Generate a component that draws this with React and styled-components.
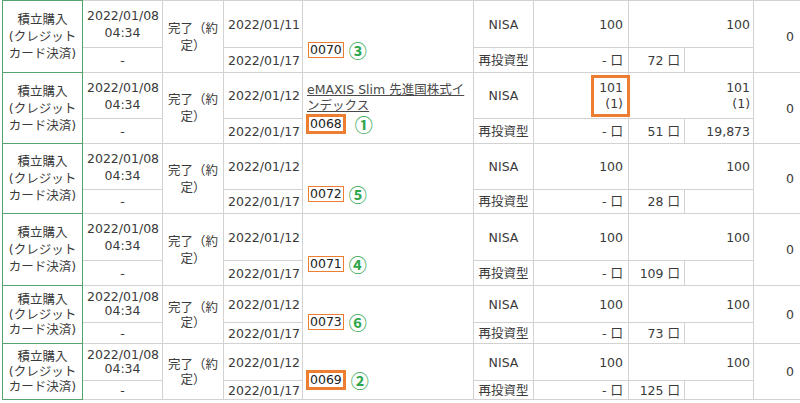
import React from 'react';
import styled, { createGlobalStyle } from 'styled-components';

const Global = createGlobalStyle`
  html, body { margin: 0; padding: 0; background: #fff; overflow: hidden; }
  body {
    font-family: "DejaVu Sans", "Noto Sans CJK JP", sans-serif;
    font-size: 12.5px;
    color: #3a3a3a;
  }
`;

const ORANGE = '#ed7d31';
const GREEN_LINE = '#55a36f';
const GRID = '#d2d2d2';

const Table = styled.table`
  border-collapse: collapse;
  table-layout: fixed;
  width: 799px;
  margin-left: 2px;
  font-size: 12.5px;
  color: #3a3a3a;
`;

const Col = styled.col`
  width: ${(p) => p.$w}px;
`;

const Row = styled.tr`
  height: ${(p) => p.$h}px;
`;

const Cell = styled.td`
  border: 1px solid ${GRID};
  padding: 0 ${(p) => (p.$pr != null ? p.$pr : 4)}px 0 4px;
  text-align: ${(p) => p.$align || 'center'};
  vertical-align: middle;
  line-height: ${(p) => p.$lh || 17}px;
  white-space: ${(p) => (p.$wrap ? 'normal' : 'nowrap')};
  overflow: visible;
`;

const KindCell = styled(Cell)`
  border: 1px solid ${GREEN_LINE};
  white-space: normal;
`;

const CodeCell = styled(Cell)`
  text-align: left;
  vertical-align: bottom;
  padding-bottom: ${(p) => p.$pb}px;
  padding-left: 3px;
`;

const FundLink = styled.a`
  display: block;
  color: #4a4a4a;
  text-decoration: underline;
  line-height: 16px;
  margin-left: 1px;
`;

const CodeLine = styled.div`
  display: flex;
  align-items: center;
  gap: 5px;
  height: 20px;
`;

const CodeBox = styled.span`
  display: inline-block;
  border: ${(p) => (p.$thick ? 3 : 1)}px solid ${ORANGE};
  line-height: 14px;
  padding: 0 1px;
  margin-left: ${(p) => (p.$thick ? 0 : 2)}px;
  color: #222;
`;

const Mark = styled.span`
  font-family: "Noto Sans CJK JP", sans-serif;
  color: #2fa64c;
  font-size: 18px;
  font-weight: 600;
  line-height: 1;
  margin-left: ${(p) => (p.$extra ? 4 : 0)}px;
`;

const Highlight = styled.span`
  display: inline-block;
  border: 3px solid ${ORANGE};
  padding: 2px 4px 2px 5px;
  margin-right: -7px;
  line-height: 16px;
  text-align: right;
`;

const Stack = styled.span`
  display: inline-block;
  line-height: 16px;
  text-align: right;
`;

const records = [
  { d1: '2022/01/11', code: '0070', mark: '③', reinv: '72 口', hA: 47, hB: 25, pb: 12 },
  {
    d1: '2022/01/12', code: '0068', mark: '①', thick: true, fund: true,
    hi: true, reinv: '51 口', amt: '19,873', hA: 46, hB: 25, pb: 9,
  },
  { d1: '2022/01/12', code: '0072', mark: '⑤', reinv: '28 口', hA: 46, hB: 24, pb: 9 },
  { d1: '2022/01/12', code: '0071', mark: '④', reinv: '109 口', hA: 47, hB: 25, pb: 11 },
  { d1: '2022/01/12', code: '0073', mark: '⑥', reinv: '73 口', hA: 37, hB: 21, pb: 11, compact: true },
  { d1: '2022/01/12', code: '0069', mark: '②', thick: true, reinv: '125 口', hA: 37, hB: 19, pb: 9, compact: true },
];

const widths = [80, 80, 61, 79, 171, 60, 95, 56, 69, 48];

function Record({ r }) {
  const lh = r.compact ? 15 : 17;
  const lh2 = r.compact ? 14 : 17;
  return (
    <>
      <Row $h={r.hA}>
        <KindCell rowSpan={2} $lh={lh}>
          積立購入<br />(クレジット<br />カード決済)
        </KindCell>
        <Cell $lh={lh2}>
          2022/01/08<br />04:34
        </Cell>
        <Cell rowSpan={2} $lh={lh} $wrap>
          完了（約定）
        </Cell>
        <Cell>{r.d1}</Cell>
        <CodeCell rowSpan={2} $pb={r.pb}>
          {r.fund && (
            <FundLink>
              eMAXIS Slim 先進国株式イ<br />ンデックス
            </FundLink>
          )}
          <CodeLine>
            <CodeBox $thick={r.thick}>{r.code}</CodeBox>
            <Mark $extra={r.mark === '①'}>{r.mark}</Mark>
          </CodeLine>
        </CodeCell>
        <Cell>NISA</Cell>
        <Cell $align="right" $pr={5}>
          {r.hi ? (
            <Highlight>
              101<br />(1)
            </Highlight>
          ) : (
            '100'
          )}
        </Cell>
        <Cell colSpan={2} $align="right" $pr={3}>
          {r.hi ? (
            <Stack>
              101<br />(1)
            </Stack>
          ) : (
            '100'
          )}
        </Cell>
        <Cell rowSpan={2} $align="right" $pr={7}>
          0
        </Cell>
      </Row>
      <Row $h={r.hB}>
        <Cell>-</Cell>
        <Cell>2022/01/17</Cell>
        <Cell>再投資型</Cell>
        <Cell $align="right" $pr={5}>- 口</Cell>
        <Cell $align="right" $pr={4}>{r.reinv}</Cell>
        <Cell $align="right" $pr={3}>{r.amt || ''}</Cell>
      </Row>
    </>
  );
}

export default function App() {
  return (
    <>
      <Global />
      <Table>
        <colgroup>
          {widths.map((w, i) => (
            <Col key={i} $w={w} />
          ))}
        </colgroup>
        <tbody>
          {records.map((r, i) => (
            <Record key={i} r={r} />
          ))}
        </tbody>
      </Table>
    </>
  );
}
